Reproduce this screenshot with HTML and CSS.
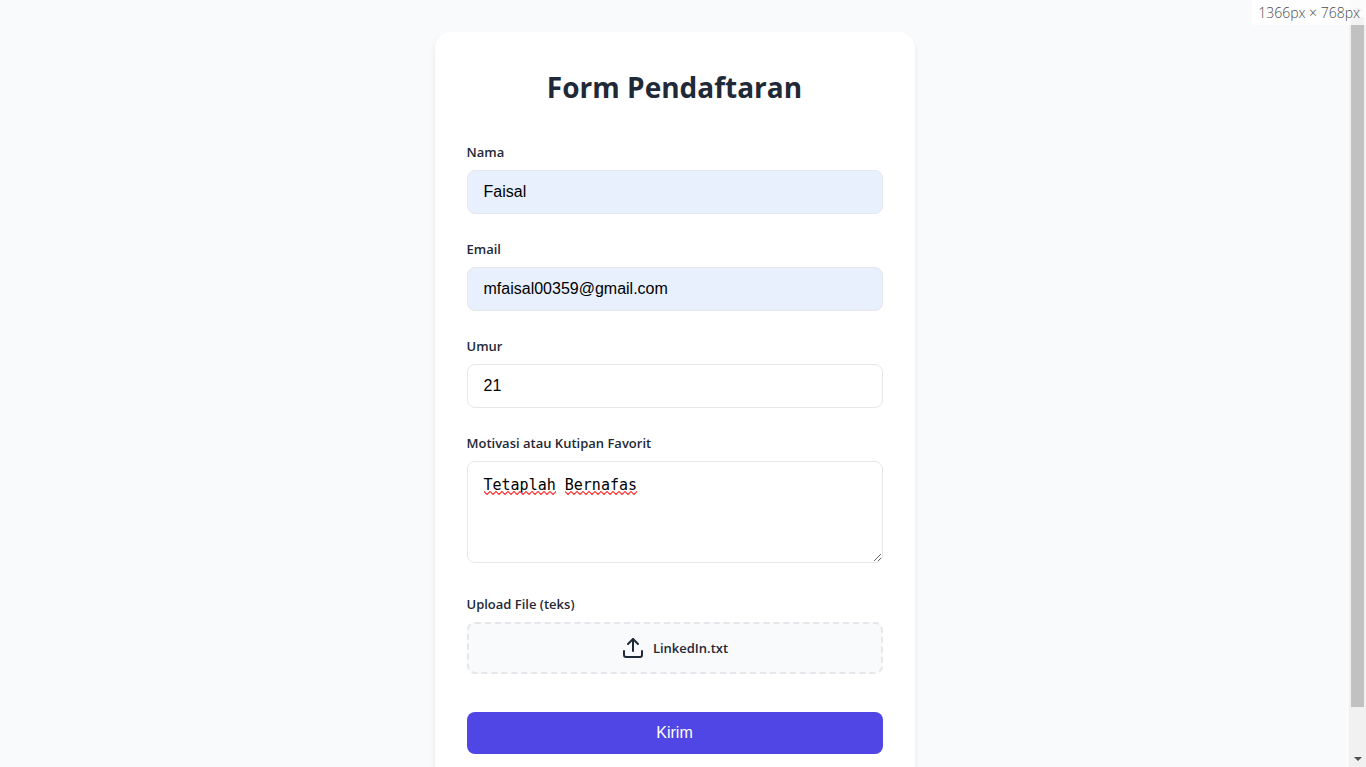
FILE: index.html
```html
<!DOCTYPE html>
<html lang="id">
<head>
<meta charset="utf-8">
<meta name="viewport" content="width=device-width, initial-scale=1">
<title>Form Pendaftaran</title>
<link rel="stylesheet" href="styles.css">
</head>
<body>
<main class="page">
  <form class="card">
    <h1 class="title">Form Pendaftaran</h1>
    <div class="group">
      <label class="label" for="nama">Nama</label>
      <input class="field filled" id="nama" type="text" value="Faisal">
    </div>
    <div class="group">
      <label class="label" for="email">Email</label>
      <input class="field filled" id="email" type="email" value="mfaisal00359@gmail.com">
    </div>
    <div class="group">
      <label class="label" for="umur">Umur</label>
      <input class="field" id="umur" type="text" inputmode="numeric" value="21">
    </div>
    <div class="group group-text">
      <label class="label" for="motivasi">Motivasi atau Kutipan Favorit</label>
      <div class="text-wrap">
        <textarea class="field area" id="motivasi" spellcheck="false">Tetaplah Bernafas</textarea>
        <div class="squiggles" aria-hidden="true"><span class="squiggle"></span><span class="squiggle"></span></div>
      </div>
    </div>
    <div class="group group-file">
      <label class="label" for="berkas">Upload File (teks)</label>
      <button class="upload" id="berkas" type="button">
        <svg class="upload-icon" viewBox="0 0 24 24" width="24" height="24" fill="none" stroke="currentColor" stroke-width="2" stroke-linecap="round" stroke-linejoin="round" aria-hidden="true"><path d="M21 15v4a2 2 0 0 1-2 2H5a2 2 0 0 1-2-2v-4"/><path d="M17 8l-5-5-5 5"/><path d="M12 3v12"/></svg>
        <span>LinkedIn.txt</span>
      </button>
    </div>
    <button class="submit" type="submit">Kirim</button>
  </form>
</main>
<div class="scrollbar" aria-hidden="true">
  <span class="arrow arrow-up"></span>
  <span class="thumb"></span>
  <span class="arrow arrow-down"></span>
</div>
<div class="size-badge">1366px × 768px</div>
</body>
</html>
```
FILE: styles.css
```css
* { box-sizing: border-box; }

body {
  margin: 0;
  height: 100vh;
  overflow: hidden;
  display: flex;
  background: #f9fafc;
  color: #1f2937;
  font-family: "Segoe UI", "Open Sans", sans-serif;
}

.page {
  flex: 1;
  min-width: 0;
  padding: 32px 16px;
}

.card {
  max-width: 480px;
  margin: 0 auto;
  padding: 32px;
  background: #fff;
  border-radius: 16px;
  box-shadow: 0 4px 6px rgba(0, 0, 0, 0.08);
}

.title {
  margin: 0 0 32px;
  font-size: 28px;
  line-height: 46px;
  font-weight: 700;
  text-align: center;
}

.group { margin-bottom: 25px; }
.group-text { margin-bottom: 31px; }
.group-file { margin-bottom: 38px; }

.label {
  display: block;
  margin-bottom: 8px;
  font-size: 13px;
  line-height: 20px;
  font-weight: 600;
}

.field {
  display: block;
  width: 100%;
  height: 44px;
  padding: 12px 16px;
  border: 1px solid #e5e7eb;
  border-radius: 8px;
  background: #fff;
  color: #000;
  font-family: Arial, "Liberation Sans", sans-serif;
  font-size: 16px;
  outline: none;
}

.filled { background: #e8f0fe; }

.text-wrap { position: relative; }

.area,
.squiggles {
  font-family: Consolas, "DejaVu Sans Mono", monospace;
  font-size: 15px;
  line-height: 22px;
}

.area {
  height: 102px;
  resize: vertical;
}

.squiggles {
  position: absolute;
  top: 30px;
  left: 17px;
  display: flex;
  gap: 1ch;
  pointer-events: none;
}

.squiggle {
  width: 8ch;
  height: 4px;
  background: url("data:image/svg+xml,%3Csvg xmlns='http://www.w3.org/2000/svg' width='6' height='4'%3E%3Cpath d='M-1 0L0 .5L3 3.5L6 .5L7 0' fill='none' stroke='%23f33' stroke-width='1.2'/%3E%3C/svg%3E") repeat-x;
}

.upload {
  display: flex;
  align-items: center;
  justify-content: center;
  gap: 8px;
  width: 100%;
  height: 52px;
  padding: 12px;
  border: 2px dashed #e5e7eb;
  border-radius: 8px;
  background: #f9fafc;
  color: #1f2937;
  font-family: inherit;
  font-size: 13px;
  font-weight: 600;
}

.submit {
  display: block;
  width: 100%;
  height: 42px;
  border: 0;
  border-radius: 8px;
  background: #4f46e5;
  color: #fff;
  font-family: Arial, "Liberation Sans", sans-serif;
  font-size: 16px;
}

.scrollbar {
  display: flex;
  flex-direction: column;
  align-items: center;
  width: 17px;
  background: #f1f1f1;
}

.arrow {
  display: flex;
  align-items: center;
  justify-content: center;
  height: 17px;
}

.arrow::before {
  content: "";
  border: 4px solid transparent;
}

.arrow-up::before { border-top: 0; border-bottom-color: #a3a3a3; }
.arrow-down { margin-top: auto; }
.arrow-down::before { border-bottom: 0; border-top-color: #505050; }

.thumb {
  width: 13px;
  flex: 0 1 90%;
  background: #c1c1c1;
}

.size-badge {
  position: absolute;
  top: 0;
  right: 0;
  padding: 4px 6px 3px;
  background: rgba(255, 255, 255, 0.8);
  color: #4b4c4f;
  font-size: 14px;
  font-weight: 300;
  line-height: 18px;
}
```
